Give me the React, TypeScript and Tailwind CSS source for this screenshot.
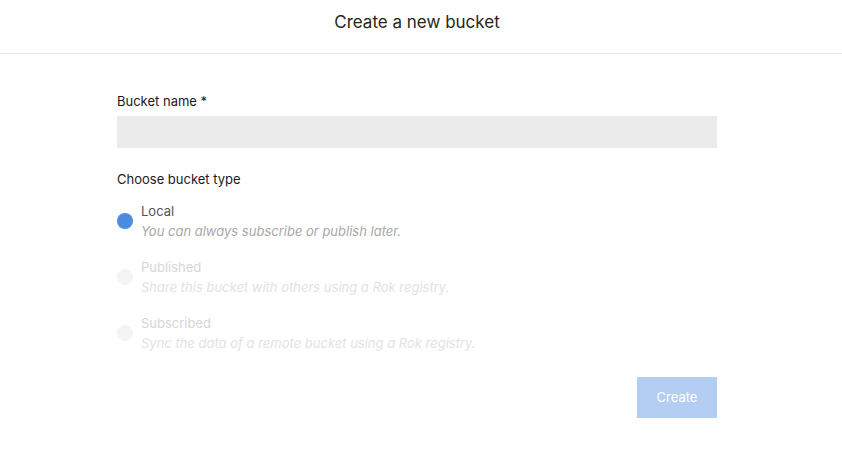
import React from "react";

const options = [
  { label: "Local", desc: "You can always subscribe or publish later.", active: true },
  { label: "Published", desc: "Share this bucket with others using a Rok registry.", active: false },
  { label: "Subscribed", desc: "Sync the data of a remote bucket using a Rok registry.", active: false },
];

export default function App() {
  return (
    <div className="w-[842px] h-[455px] bg-white font-['Inter',sans-serif] text-[#222]">
      <div className="h-[54px] border-b border-[#e8e8e8] flex items-start justify-center pt-[10px] pr-[8px]">
        <h1 className="text-[17px] leading-[24px] text-[#2a2418]">Create a new bucket</h1>
      </div>
      <div className="w-[600px] ml-[117px] pt-[38px]">
        <label className="block text-[13px] leading-[18px] text-[#1a1a1a]">Bucket name *</label>
        <div className="mt-[6px] h-[32px] bg-[#ebebeb]" />
        <div className="mt-[22px] text-[13px] leading-[18px] text-[#1a1a1a]">Choose bucket type</div>
        <div className="mt-[13px] flex flex-col gap-[16px]">
          {options.map((o) => (
            <div key={o.label} className="flex items-center gap-[8px]">
              <span
                className={
                  o.active
                    ? "w-[16px] h-[16px] rounded-full bg-[#4a8de0] shrink-0"
                    : "w-[16px] h-[16px] rounded-full bg-[#f4f4f4] shrink-0"
                }
              />
              <div className="flex flex-col">
                <span className={o.active ? "text-[13px] leading-[20px] text-[#555]" : "text-[13px] leading-[20px] text-[#d6d6d6]"}>
                  {o.label}
                </span>
                <span className={o.active ? "text-[13px] leading-[20px] italic text-[#a8a8a8]" : "text-[13px] leading-[20px] italic text-[#e2e2e2]"}>
                  {o.desc}
                </span>
              </div>
            </div>
          ))}
        </div>
        <div className="mt-[24px] flex justify-end">
          <button className="w-[80px] h-[41px] bg-[#b3cdf3] text-white text-[13px]">Create</button>
        </div>
      </div>
    </div>
  );
}
